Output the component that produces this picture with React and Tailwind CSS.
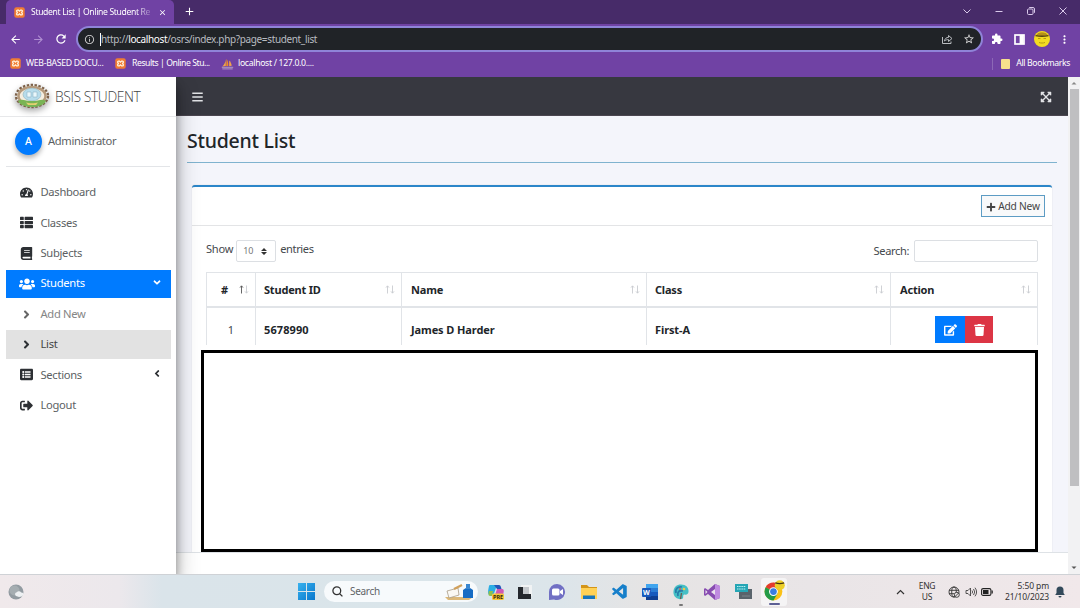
import React from "react";
import {
  FaTachometerAlt, FaThList, FaBook, FaUsers, FaAngleRight, FaAngleDown, FaAngleLeft,
  FaListAlt, FaSignOutAlt, FaExpandArrowsAlt, FaBars, FaEdit, FaTrash, FaPlus,
} from "react-icons/fa";
import {
  MdArrowBack, MdArrowForward, MdRefresh, MdInfoOutline, MdStarBorder, MdMoreVert, MdClose, MdAdd, MdExtension,
} from "react-icons/md";
import { VscVscode } from "react-icons/vsc";

function Xampp({ className }) {
  return (
    <svg className={className} viewBox="0 0 12 12">
      <rect x="0.3" y="0.3" width="11.4" height="11.4" rx="2.2" fill="#f07c33" />
      <path d="M3.8 3.4h1L6 4.6l1.200-1.200h1a1 1 0 0 1 1 1c0 .8-.6 1-1 1.600.4.6 1 .8 1 1.600a1 1 0 0 1-1 1h-1L6 7.400 4.800 8.600h-1a1 1 0 0 1-1-1c0-.8.6-1 1-1.600-.4-.6-1-.8-1-1.600a1 1 0 0 1 1-1z" fill="none" stroke="#fff3df" strokeWidth="1.300" />
    </svg>
  );
}

function PhpMyAdmin() {
  return (
    <svg className="h-3 w-[13px] shrink-0" viewBox="0 0 13 12">
      <path d="M4.800 1.500C4.500 4.500 3 7 1.200 8.500l3.600-.6z" fill="#f4a640" />
      <path d="M5.500 1c1.500 2 2 4.500 1.700 7l-1.900.3z" fill="#ef8d25" />
      <path d="M8.200 2.500c1.500 1.300 2.300 3.300 2.500 5.300l-2.600.4z" fill="#f0a04c" />
      <path d="M.8 9.300h11.400M1.300 10.900h10.400" stroke="#b8a5c8" strokeWidth=".9" />
    </svg>
  );
}

function Chrome() {
  return (
    <header className="shrink-0 text-white">
      <div className="flex h-6 items-end bg-[#472b69]">
        <div className="flex h-6 w-[168px] ml-[6px] items-center rounded-t-[5px] bg-[#7042a4] pl-2 pr-[7px]">
          <Xampp className="h-[11px] w-[11px] shrink-0" />
          <span className="ml-[6px] whitespace-nowrap text-[8.600px] tracking-[-0.34px] [mask-image:linear-gradient(to_right,black_88%,rgba(0,0,0,0.25))]">Student List | Online Student Re</span>
          <MdClose className="ml-auto h-[9px] w-[9px] shrink-0" />
        </div>
        <MdAdd className="mb-[6px] ml-[9px] h-[13px] w-[13px]" />
        <div className="mb-[8px] ml-auto mr-[12px] flex items-center gap-[22px] text-[#d9c9ea]">
          <svg className="h-[10px] w-[10px]" viewBox="0 0 10 10" fill="none" stroke="currentColor"><path d="M1.500 3.500L5 7l3.500-3.500" /></svg>
          <svg className="h-[10px] w-[10px]" viewBox="0 0 10 10" stroke="currentColor"><path d="M1.500 5.500h7" /></svg>
          <svg className="h-[10px] w-[10px]" viewBox="0 0 10 10" fill="none" stroke="currentColor"><rect x="1.500" y="3" width="5.500" height="5.500" rx="1" /><path d="M3.200 1.500h3.800a1.500 1.500 0 0 1 1.500 1.500v3.800" /></svg>
          <svg className="h-[10px] w-[10px]" viewBox="0 0 10 10" stroke="currentColor"><path d="M1.500 1.500l7 7M8.500 1.500l-7 7" /></svg>
        </div>
      </div>
      <div className="flex h-[30px] items-center bg-[#7042a4] pl-[9px] pr-[8px]">
        <MdArrowBack className="h-[13px] w-[13px] shrink-0" />
        <MdArrowForward className="ml-[10px] h-[13px] w-[13px] shrink-0 text-[#b08fd2]" />
        <MdRefresh className="ml-[9px] h-[14px] w-[14px] shrink-0" />
        <div className="ml-2 flex h-[26px] w-[907px] shrink-0 items-center rounded-full border-2 border-[#8f84d8] bg-[#202327] pl-[6px] pr-[6px]">
          <MdInfoOutline className="h-[11px] w-[11px] text-[#ccc]" />
          <span className="ml-[5px] h-[13px] w-px bg-white" />
          <span className="whitespace-nowrap pt-px text-[10px] tracking-[-0.36px] text-[#b9bcc0]">http://<span className="text-white">localhost</span>/osrs/index.php?page=student_list</span>
          <svg className="ml-auto h-3 w-3" viewBox="0 0 12 12" fill="none" stroke="#b9bcc0"><path d="M1.500 4v6.500h8.500V8.500" /><path d="M3.500 8c.3-2.500 2-3.600 4-3.600V2.500l3.500 3-3.500 3V6.600C6 6.500 4.500 7 3.500 8z" /></svg>
          <MdStarBorder className="ml-[10px] h-3 w-3 text-[#ddd]" />
        </div>
        <MdExtension className="ml-[8px] h-[12px] w-[12px] shrink-0" />
        <svg className="ml-[11px] h-[11px] w-[11px] shrink-0" viewBox="0 0 11 11"><rect x="1" y="1" width="9" height="9" fill="none" stroke="#fff" strokeWidth="1.700" /><rect x="5.600" y="1" width="4" height="9" fill="#fff" /></svg>
        <svg className="ml-[9px] h-4 w-4 shrink-0" viewBox="0 0 16 16"><circle cx="8" cy="8" r="8" fill="#f3dc21" /><path d="M2 4.500C3.500 0 12.500 0 14 4.500c-4 .6-8 .6-12 0z" fill="#b59018" /><path d="M1.500 4.600c4 .8 9 .8 13 0" stroke="#54430f" strokeWidth="1.300" fill="none" /><path d="M4 7.500h2.500M9.500 7.500H12M5 11.500c2 .7 4 .7 6 0" stroke="#b79a14" fill="none" /></svg>
        <MdMoreVert className="ml-2 h-[13px] w-[13px] shrink-0" />
      </div>
      <div className="flex h-[23px] items-center bg-[#7042a4] pb-[4px] pl-[10px] pr-[10px] text-[8.700px] whitespace-nowrap">
        <Xampp className="h-[11px] w-[11px] shrink-0" />
        <span className="ml-[5px] w-[84px] tracking-[-0.3px]">WEB-BASED DOCU...</span>
        <Xampp className="ml-[5px] h-[11px] w-[11px] shrink-0" />
        <span className="ml-[6px] w-[84px] tracking-[-0.45px]">Results | Online Stu...</span>
        <span className="ml-[5px]"><PhpMyAdmin /></span>
        <span className="ml-[4px] tracking-[-0.33px]">localhost / 127.0.0....</span>
        <span className="ml-auto h-3 w-px bg-[#8c68b6]" />
        <span className="ml-[8px] h-[10px] w-[9px] rounded-[1px] bg-[#f8df8c]" />
        <span className="ml-[6px] tracking-[-0.36px]">All Bookmarks</span>
      </div>
    </header>
  );
}

function SchoolSeal() {
  return (
    <svg className="h-7 w-9 shrink-0 drop-shadow-[0_3px_3px_rgba(0,0,0,0.35)]" viewBox="0 0 36 28">
      <ellipse cx="18" cy="13" rx="16" ry="11" fill="#eef0ec" stroke="#7d6149" strokeWidth="2.400" strokeDasharray="2.400 1.500" />
      <ellipse cx="18" cy="13" rx="13.500" ry="9" fill="#f5eee0" stroke="#b59a7c" strokeWidth="2.500" />
      <ellipse cx="18" cy="11.500" rx="9" ry="6.300" fill="#b7dceb" stroke="#8fb4bd" strokeWidth=".6" />
      <path d="M13 9h4v5h-4zM19 9h4v5h-4z" fill="#e9f7fb" stroke="#86aab8" strokeWidth=".5" />
      <path d="M4 18c4-3 7 0 14 0s10-3 14 0c-2 4-8 6-14 6S6 22 4 18z" fill="#79b455" />
      <path d="M12 19.500c3 1 9 1 12 0l-2 2.500h-8z" fill="#e4cf71" />
    </svg>
  );
}

const NAV = [
  { label: "Dashboard", Icon: FaTachometerAlt },
  { label: "Classes", Icon: FaThList },
  { label: "Subjects", Icon: FaBook },
  { label: "Students", Icon: FaUsers, tone: "bg-[#007bff] text-white", icon: "text-white", End: FaAngleDown },
  { label: "Add New", Icon: FaAngleRight, tone: "text-[#858585]", icon: "text-[#666]" },
  { label: "List", Icon: FaAngleRight, tone: "bg-[#e2e2e2] text-[#444]" },
  { label: "Sections", Icon: FaListAlt, End: FaAngleLeft },
  { label: "Logout", Icon: FaSignOutAlt },
];

function Sidebar() {
  return (
    <aside className="relative z-10 flex w-[176px] shrink-0 flex-col bg-white text-[#5c5f63] shadow-[0_11px_22px_rgba(0,0,0,0.3),0_8px_9px_rgba(0,0,0,0.32)]">
      <div className="flex h-[40px] shrink-0 items-center border-b border-[#e7e8ea] pl-[14px]">
        <SchoolSeal />
        <span className="ml-[5px] whitespace-nowrap pt-px font-[Open_Sans] text-[13.800px] font-light tracking-[-0.38px] text-[#444]">BSIS STUDENT</span>
      </div>
      <div className="mx-[6px] flex h-[50px] shrink-0 items-center border-b border-[#e3e5e8] pl-[9px]">
        <span className="flex h-[27px] w-[27px] items-center justify-center rounded-full bg-[#007bff] text-[10.500px] font-medium text-white shadow-[0_3px_5px_rgba(0,0,0,0.3)]">A</span>
        <span className="ml-[6px] text-[11.200px] tracking-[-0.34px]">Administrator</span>
      </div>
      <nav className="ml-[5.500px] mr-[5.500px] mt-[11.400px] flex flex-col gap-[2px]">
        {NAV.map(({ label, Icon, tone, icon, End }) => (
          <a key={label} className={"flex h-[28.400px] items-center pl-[13px] pr-[9px] text-[11.200px] tracking-[-0.3px] " + (tone || "")}>
            <span className={"flex w-4 justify-center " + (icon || "text-[#2d3034]")}>
              <Icon className={label === "Students" ? "h-[14px] w-4" : "h-[13px] w-[13px]"} />
            </span>
            <span className="ml-[6px]">{label}</span>
            {End && <End className={"ml-auto mb-[2px] h-[11px] w-[10px] " + (icon || "text-[#2d3034]")} />}
          </a>
        ))}
      </nav>
    </aside>
  );
}

function SortArrows({ active }) {
  return (
    <svg className="ml-auto mb-[2px] h-[9px] w-[10px] shrink-0" viewBox="0 0 10 9" fill="none" stroke="#c9ccd0" strokeWidth=".9">
      <path d="M2.500 8.500V1M1 2.600L2.500 .8 4 2.600" stroke={active ? "#555" : "#c9ccd0"} />
      <path d="M7.500.5V8M6 6.400l1.500 1.800L9 6.400" />
    </svg>
  );
}

function StudentTable() {
  const head = [
    ["#", "pl-[14px]"],
    ["Student ID", "pl-2"],
    ["Name", "pl-[9px]"],
    ["Class", "pl-2"],
    ["Action", "pl-[9px]"],
  ];
  return (
    <div className="ml-[14px] grid w-[832px] grid-cols-[49px_146px_245px_244px_147px] border-l border-t border-[#e1e4e8] text-[11px] text-[#212529]">
      {head.map(([h, pad], i) => (
        <div key={h} className={"flex h-[35px] items-center border-b-2 border-r border-[#e1e4e8] pr-[6px] pt-px font-bold " + pad}>
          <span className="tracking-[-0.2px]">{h}</span>
          <SortArrows active={i === 0} />
        </div>
      ))}
      <div className="flex h-[37px] items-center justify-center border-r border-[#e1e4e8] pt-[8px] text-[#45494d]">1</div>
      <div className="flex items-center border-r border-[#e1e4e8] pl-2 pt-[8px] font-bold tracking-[0.1px]">5678990</div>
      <div className="flex items-center border-r border-[#e1e4e8] pl-[9px] pt-[8px] font-bold tracking-[-0.1px]">James D Harder</div>
      <div className="flex items-center border-r border-[#e1e4e8] pl-2 pt-[8px] font-bold tracking-[-0.1px]">First-A</div>
      <div className="flex items-center justify-center border-r border-[#e1e4e8] pt-[6px] text-white">
        <span className="flex h-[27px] w-[30px] items-center justify-center bg-[#007bff]"><FaEdit className="h-3 w-[13px]" /></span>
        <span className="flex h-[27px] w-[28px] items-center justify-center bg-[#dc3545]"><FaTrash className="h-3 w-[11px]" /></span>
      </div>
    </div>
  );
}

function Main() {
  return (
    <main className="flex min-w-0 flex-1 flex-col">
      <div className="flex h-[39px] shrink-0 items-center justify-between border-b border-[#4b4650] bg-[#373840] pl-4 pr-4 text-[#e2e3e6]">
        <FaBars className="mt-px h-3 w-[11px]" />
        <FaExpandArrowsAlt className="mt-px h-3 w-3" />
      </div>
      <div className="flex min-h-0 flex-1 flex-col overflow-hidden bg-[#f4f5fb]">
        <div className="ml-[11px] mr-[11px] flex h-[47px] shrink-0 items-center border-b border-[#7fb3cf] pt-[3px]">
          <h1 className="text-[19.500px] font-medium tracking-[-0.24px] text-[#212529]">Student List</h1>
        </div>
        <section className="ml-[16px] mr-[16px] mt-[22px] flex-1 rounded-t-[3px] border-t-2 border-[#2b86c9] bg-white shadow-[0_0_1px_rgba(0,0,0,0.25)]">
          <div className="flex h-[39px] items-center justify-end border-b border-[#e3e4e6] pr-[7px]">
            <button className="flex h-[22px] w-[64px] items-center justify-center border border-[#5d9cc4] bg-[#f8f9fa] pt-px text-[10.200px] tracking-[-0.22px] text-[#444]">
              <FaPlus className="mr-[2px] h-[10px] w-[10px]" />Add New
            </button>
          </div>
          <div className="flex h-[46px] items-center px-[14px] pt-[4px] text-[11.100px] tracking-[-0.15px] text-[#45494d]">
            <span className="pb-[3px] tracking-[-0.25px]">Show</span>
            <span className="ml-[3px] flex h-[22px] w-[40px] items-center justify-between rounded-[2px] border border-[#dcdfe3] pl-[6px] pr-[8px] text-[9px] text-[#777]">
              10
              <svg className="h-[7px] w-[6px]" viewBox="0 0 6 7" fill="#333"><path d="M3 0l3 3H0zM3 7L0 4h6z" /></svg>
            </span>
            <span className="ml-[4px] pb-[3px] tracking-[-0.38px]">entries</span>
            <span className="ml-auto tracking-[-0.38px]">Search:</span>
            <span className="ml-[5px] h-[22px] w-[124px] rounded-[2px] border border-[#dcdfe3]" />
          </div>
          <StudentTable />
          <div className="ml-[9px] mt-[5px] h-[202px] w-[837px] border-[3px] border-black bg-white" />
        </section>
      </div>
      <footer className="h-[22px] shrink-0 border-t border-[#dee2e6] bg-white" />
    </main>
  );
}

function ScrollBar() {
  return (
    <div className="flex w-3 shrink-0 flex-col items-center bg-[#f2f2f3]">
      <svg className="h-3 w-3 shrink-0" viewBox="0 0 12 12"><path d="M3.500 7.500L6 5l2.500 2.500z" fill="#888" /></svg>
      <div className="h-[397px] w-[9px] bg-[#bfbfc1]" />
      <svg className="mt-auto h-3 w-3 shrink-0" viewBox="0 0 12 12"><path d="M3.500 4.500L6 7l2.500-2.500z" fill="#555" /></svg>
    </div>
  );
}

function Taskbar() {
  return (
    <footer className="flex h-[34px] shrink-0 items-center border-t border-[#cfd2d6] bg-[linear-gradient(90deg,#f0e9eb_0%,#ece8ec_11%,#dae4ea_15%,#dae5ea_38%,#dce5ea_52%,#e6e4e4_60%,#e9e5e7_75%,#f1e8ea_100%)] pl-2 pr-[15px]">
      <svg className="h-4 w-4" viewBox="0 0 16 16"><circle cx="8" cy="8" r="7.500" fill="#929ba1" /><circle cx="6.500" cy="6.500" r="5" fill="#a5adb1" /><path d="M8 12a2 2 0 0 1 .8-3.700 2.500 2.500 0 0 1 4.300.2 2 2 0 0 1 2.400 2.500A6 6 0 0 1 11 13z" fill="#edf0f2" /></svg>
      <svg className="ml-[274px] h-[17px] w-[17px]" viewBox="0 0 17 17">
        <defs><linearGradient id="win" x1="0" y1="0" x2="1" y2="1"><stop stopColor="#38b2ee" /><stop offset="1" stopColor="#0876cc" /></linearGradient></defs>
        <path d="M0 0h8v8H0zM9 0h8v8H9zM0 9h8v8H0zM9 9h8v8H9z" fill="url(#win)" />
      </svg>
      <div className="ml-[9px] flex h-[21px] w-[154px] items-center rounded-full bg-[#f7fafc] pl-[8px]">
        <svg className="h-[11px] w-[11px]" viewBox="0 0 11 11" fill="none" stroke="#333" strokeWidth="1.300"><circle cx="4.800" cy="4.800" r="3.900" /><path d="M7.700 7.700l2.700 2.700" /></svg>
        <span className="ml-[7px] text-[10px] tracking-[-0.3px] text-[#5f6468]">Search</span>
        <svg className="ml-auto mr-[3px] h-5 w-[31px]" viewBox="0 0 31 20">
          <path d="M1 15h28l-4 3H4z" fill="#dcb878" />
          <path d="M3 9l11-3 1 7-10 3z" fill="#faf8f3" stroke="#a89b85" strokeWidth=".8" />
          <path d="M10 7l8-4" stroke="#d0a05c" strokeWidth="2.200" />
          <path d="M19 8q5-5 10 0v8H19z" fill="#176cc4" /><path d="M22 2h4v5h-4z" fill="#3a87d0" />
        </svg>
      </div>
      <svg className="ml-[9px] h-[18px] w-[18px]" viewBox="0 0 18 18">
        <path d="M3 2h7L6.500 12H3C.5 12 1 8 1.500 5.500S2 2 3 2z" fill="#2baee4" /><path d="M2 8h4l-1 5H3c-2 0-1.700-3-1-5z" fill="#8fc04e" />
        <path d="M7 2h5c2 0 2 3 2.600 4H10z" fill="#2457ba" /><path d="M10 6h5c2 0 2 2 1.500 4s-1 5-3.500 5H7z" fill="#d059b4" />
        <rect x="5" y="10.500" width="12" height="6.500" rx="1.500" fill="#f7c83a" />
        <text x="6" y="15.800" className="fill-[#33290a] text-[5.500px] font-bold">PRE</text>
      </svg>
      <svg className="ml-[12px] h-[17px] w-[16px]" viewBox="0 0 16 17"><path d="M4 2h11v11H4z" fill="#f1f3f4" /><path d="M1 4h5v7h8v5H1z" fill="#24282d" /><path d="M6 4h6v7H6z" fill="#c4c8cc" /></svg>
      <svg className="ml-[15px] h-[18px] w-[18px]" viewBox="0 0 18 18"><path d="M9 1a8 8 0 1 1-3 15.400L1 17V9a8 8 0 0 1 8-8z" fill="#7170c4" /><rect x="4" y="5.500" width="7.500" height="7" rx="1.500" fill="#fff" /><path d="M12 8l3-2v6l-3-2z" fill="#fff" /></svg>
      <svg className="ml-[14px] h-[17px] w-[18px]" viewBox="0 0 18 17"><path d="M1 2h6l2 2h8v4H1z" fill="#d49519" /><path d="M1 5h16v11H1z" fill="#ffd257" /><path d="M3 12.500h12V16H3z" fill="#1776bd" /></svg>
      <VscVscode className="ml-[13px] h-[18px] w-[18px] text-[#167fca]" />
      <svg className="ml-[12px] h-[18px] w-[18px]" viewBox="0 0 18 18">
        <path d="M5 1h12v4H5z" fill="#41a5ee" /><path d="M5 5h12v4H5z" fill="#2b7cd3" /><path d="M5 9h12v4H5z" fill="#185abd" /><path d="M5 13h12v4H5z" fill="#103f91" />
        <rect x="1" y="5" width="9" height="9" rx="1" fill="#185abd" /><text x="2" y="12" className="fill-white text-[7px] font-bold">W</text>
      </svg>
      <div className="ml-[13px] flex h-[28px] w-[18px] flex-col items-center justify-end gap-[3px]">
        <svg className="h-[18px] w-[18px]" viewBox="0 0 18 18"><path d="M9 1.500c5 0 8 3 7.500 7.500-.3 2.500-2.500 3-3.500 2.500-1.500-.5-2 1-1.800 2.500.2 2-2 2.500-4.200 2-4-1-6-4-5.500-8S4.500 1.500 9 1.500z" fill="#45bfc5" /><path d="M4 10c-1-4 2-7 6-6M6 13c-1-4 1-6 5-5" stroke="#277eaa" strokeWidth="1.800" fill="none" /><circle cx="12" cy="6" r="1.300" fill="#f0c64c" /><circle cx="8" cy="6" r="1.100" fill="#c95e65" /><path d="M8.500 16l1-6" stroke="#735c51" strokeWidth="1.300" /></svg>
        <span className="h-[2px] w-1 rounded-full bg-[#777]" />
      </div>
      <svg className="ml-[13px] h-[18px] w-[18px]" viewBox="0 0 18 18"><path d="M12 1l5 2v12l-5 2-7-6-3 2-1-1V6l1-1 3 2z" fill="#874cb0" /><path d="M12 1l5 2v12l-5 2z" fill="#bf8ae0" /><path d="M12 6v6L8 9zM2.500 7v4l2-2z" fill="#ebe4ed" /></svg>
      <svg className="ml-[13px] h-[18px] w-[18px]" viewBox="0 0 18 18"><path d="M5 6h13v10H5z" fill="#59636b" /><path d="M1 1h13v8H1z" fill="#25a6b5" /><path d="M3 3.500h9M3 6h9" stroke="#bcf2f3" strokeDasharray="1.500 .7" /><path d="M8 13h8" stroke="#7d858c" /></svg>
      <div className="ml-[9px] flex h-[28px] w-[26px] flex-col items-center justify-between rounded-[3px] bg-[#f5f4f5] pb-px pt-[2px]">
        <svg className="h-[21px] w-[21px]" viewBox="0 0 20 20">
          <circle cx="9" cy="11" r="8.500" fill="#fbc117" /><path d="M9 11L1.600 6.800A8.500 8.500 0 0 1 16.400 6.800z" fill="#e33b2e" /><path d="M9 11L1.600 6.800A8.500 8.500 0 0 0 9 19.500l4-7z" fill="#249b48" />
          <circle cx="9" cy="11" r="4.200" fill="#fff" /><circle cx="9" cy="11" r="3.200" fill="#3a7de1" />
          <circle cx="15" cy="5" r="4.800" fill="#edcf29" /><path d="M10.800 2.800q4 1.500 8.400 0" stroke="#443713" strokeWidth="1.200" fill="none" />
        </svg>
        <span className="h-[2px] w-[11px] rounded-full bg-[#5d5f94]" />
      </div>
      <div className="ml-auto flex items-center pb-[2px] text-[8.500px] leading-[11px] text-[#333]">
        <svg className="mt-[2px] h-2 w-[9px]" viewBox="0 0 9 8" fill="none" stroke="#333" strokeWidth="1.200"><path d="M1 6l3.500-3.500L8 6" /></svg>
        <div className="ml-[13px] flex w-[18px] flex-col items-center tracking-[-0.3px]"><span>ENG</span><span>US</span></div>
        <svg className="ml-[12px] mt-[2px] h-3 w-3" viewBox="0 0 12 12" fill="none" stroke="#333" strokeWidth=".9"><circle cx="6" cy="6" r="5" /><ellipse cx="6" cy="6" rx="2.300" ry="5" /><path d="M1 4.300h10M1 7.700h5" /><circle cx="8.800" cy="8.800" r="2.500" fill="#eee8ea" /><path d="M7 10.600l3.600-3.600" /></svg>
        <svg className="ml-[5px] mt-[2px] h-3 w-3" viewBox="0 0 12 12" fill="none" stroke="#444" strokeWidth=".9"><path d="M1 4.500h2L5.500 2v8L3 7.500H1zM7 4.500q1.300 1.500 0 3M8.500 3q2.500 3 0 6M10 1.700q3.200 4.300 0 8.600" /></svg>
        <svg className="ml-[4px] mt-[2px] h-[10px] w-3" viewBox="0 0 12 10"><rect x=".6" y="1.600" width="9.300" height="6.800" rx="1.500" fill="none" stroke="#222" strokeWidth="1.100" /><rect x="2" y="3" width="5.500" height="4" fill="#222" /><path d="M11.200 3.500v3" stroke="#222" strokeWidth="1.200" /></svg>
        <div className="ml-[12px] flex w-[44px] flex-col items-end whitespace-nowrap tracking-[-0.12px]"><span>5:50 pm</span><span>21/10/2023</span></div>
        <svg className="ml-[6px] mt-[2px] h-[12px] w-[10px]" viewBox="0 0 10 12" fill="#33495a"><path d="M5 .5a3.500 3.500 0 0 1 3.500 3.500v3l1.300 2H.2l1.300-2V4A3.500 3.500 0 0 1 5 .5zM3.500 10h3a1.500 1.500 0 0 1-3 0z" /></svg>
      </div>
    </footer>
  );
}

export default function App() {
  return (
    <div className="flex h-[608px] w-[1080px] flex-col overflow-hidden bg-white font-['Noto_Sans','Open_Sans',sans-serif]">
      <Chrome />
      <div className="flex min-h-0 flex-1 overflow-hidden">
        <Sidebar />
        <Main />
        <ScrollBar />
      </div>
      <Taskbar />
    </div>
  );
}
